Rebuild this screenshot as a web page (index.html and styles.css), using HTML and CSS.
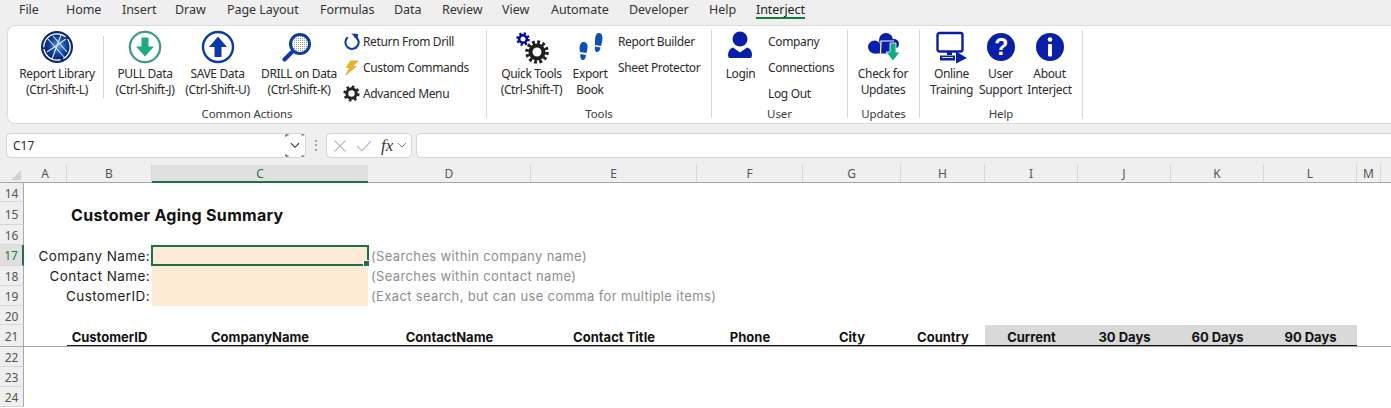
FILE: index.html
```html
<!DOCTYPE html>
<html lang="en">
<head>
    <meta charset="UTF-8">
    <title>Customer Aging Summary - Excel</title>
    <link rel="stylesheet" href="styles.css">
</head>
<body>
    <nav class="tabs">
        <span class="tab t-file">File</span>
        <span class="tab t-home">Home</span>
        <span class="tab t-insert">Insert</span>
        <span class="tab t-draw">Draw</span>
        <span class="tab t-layout">Page Layout</span>
        <span class="tab t-formulas">Formulas</span>
        <span class="tab t-data">Data</span>
        <span class="tab t-review">Review</span>
        <span class="tab t-view">View</span>
        <span class="tab t-automate">Automate</span>
        <span class="tab t-dev">Developer</span>
        <span class="tab t-help">Help</span>
        <span class="tab active">Interject</span>
    </nav>

    <div class="ribbon">
        <section class="group g-common">
            <div class="group-body">
                <div class="big w-library">
                    <svg class="big-icon" viewBox="0 0 34 34">
                        <defs>
                            <radialGradient id="globe" cx="0.55" cy="0.45" r="0.6">
                                <stop offset="0" stop-color="#5f9be8"/>
                                <stop offset="0.55" stop-color="#14479f"/>
                                <stop offset="1" stop-color="#08205f"/>
                            </radialGradient>
                        </defs>
                        <circle cx="17" cy="17" r="16" fill="#0a2a78"/>
                        <circle cx="17" cy="17" r="13.2" fill="none" stroke="#fff" stroke-width="1.3" stroke-dasharray="14 3 22 2 30 3"/>
                        <circle cx="17" cy="17" r="12" fill="url(#globe)"/>
                        <path d="M8 9 L25 28 M13 6 L27 22 M21 5 L12 29 M26 9 L7 22" stroke="#dbe9fb" stroke-width="1.1" fill="none"/>
                    </svg>
                    <span>Report Library<br>(Ctrl-Shift-L)</span>
                </div>
                <div class="sep"></div>
                <div class="big w-pull">
                    <svg class="big-icon" viewBox="0 0 34 34">
                        <circle cx="17" cy="17" r="15" fill="#fff" stroke="#2aa98c" stroke-width="2"/>
                        <circle cx="17" cy="17" r="16" fill="none" stroke="#5a6b68" stroke-width="0.6"/>
                        <path d="M13.5 7.500h7v9h5.500L17 26.500 8 16.500h5.500z" fill="#1fa888"/>
                    </svg>
                    <span>PULL Data<br>(Ctrl-Shift-J)</span>
                </div>
                <div class="big w-save">
                    <svg class="big-icon" viewBox="0 0 34 34">
                        <circle cx="17" cy="17" r="15" fill="#fff" stroke="#0a3aa5" stroke-width="2.400"/>
                        <path d="M13.5 27v-10H8l9-10.500L26 17h-5.500v10z" fill="#0a3aa5"/>
                    </svg>
                    <span>SAVE Data<br>(Ctrl-Shift-U)</span>
                </div>
                <div class="big w-drill">
                    <svg class="big-icon" viewBox="0 0 34 34">
                        <defs>
                            <pattern id="hatch" width="2" height="2" patternUnits="userSpaceOnUse">
                                <rect width="2" height="2" fill="#fff"/>
                                <rect width="1" height="1" fill="#9a9a9a"/>
                            </pattern>
                        </defs>
                        <path d="M10 22 L2.500 29.500" stroke="#0a3aa5" stroke-width="4" stroke-linecap="round"/>
                        <circle cx="18" cy="14" r="9.500" fill="url(#hatch)" stroke="#0a3aa5" stroke-width="3"/>
                    </svg>
                    <span>DRILL on Data<br>(Ctrl-Shift-K)</span>
                </div>
                <div class="stack">
                    <div class="small">
                        <svg class="small-icon" viewBox="0 0 18 18">
                            <path d="M5 4.500a7 7 0 1 0 7-1.200" fill="none" stroke="#0a3aa5" stroke-width="2.200"/>
                            <path d="M9 0.500l7 0.500-1 6.500z" fill="#0a3aa5"/>
                        </svg>
                        <span>Return From Drill</span>
                    </div>
                    <div class="small">
                        <svg class="small-icon" viewBox="0 0 18 18">
                            <path d="M8 2h8L10 8h4L3 17l4-8H3.500z" fill="#f0b41e" stroke="#c98a10" stroke-width="0.500"/>
                        </svg>
                        <span>Custom Commands</span>
                    </div>
                    <div class="small">
                        <svg class="small-icon" viewBox="0 0 18 18">
                            <circle cx="9" cy="9" r="5" fill="none" stroke="#262626" stroke-width="3.200"/>
                            <circle cx="9" cy="9" r="7" fill="none" stroke="#262626" stroke-width="3.200" stroke-dasharray="2.700 2.800"/>
                        </svg>
                        <span>Advanced Menu</span>
                    </div>
                </div>
            </div>
            <div class="group-label">Common Actions</div>
        </section>

        <section class="group g-tools">
            <div class="group-body">
                <div class="big w-quick">
                    <svg class="big-icon" viewBox="0 0 34 34">
                        <circle cx="8" cy="9" r="3.800" fill="none" stroke="#0000a8" stroke-width="2.600"/>
                        <circle cx="8" cy="9" r="5.600" fill="none" stroke="#0000a8" stroke-width="2.400" stroke-dasharray="2.200 2.200"/>
                        <circle cx="22" cy="22" r="6.500" fill="none" stroke="#1e1e1e" stroke-width="4"/>
                        <circle cx="22" cy="22" r="10" fill="none" stroke="#1e1e1e" stroke-width="3.600" stroke-dasharray="2.800 2.430"/>
                    </svg>
                    <span>Quick Tools<br>(Ctrl-Shift-T)</span>
                </div>
                <div class="big w-export">
                    <svg class="big-icon" viewBox="0 0 34 34">
                        <path d="M10.500 12c3 0 4.500 2.500 4 6-.3 2-.6 3.500-1 5l-6.500-1c-1-3.500-.5-10 3.500-10z" fill="#0f50b8"/>
                        <path d="M7.500 24l5.500 1c-.2 3.500-1.500 5-3.200 5-2 0-2.800-2.500-2.300-6z" fill="#0f50b8"/>
                        <path d="M26 3c3.500 0 4 4.500 3 9-.4 1.500-.7 3-1 4l-6-1c0-4-.5-12 4-12z" fill="#0f50b8"/>
                        <path d="M22 16.500l5.500 1c-.5 3-1.800 4.500-3.500 4.500-1.800 0-2.500-2.500-2-5.500z" fill="#0f50b8"/>
                    </svg>
                    <span>Export<br>Book</span>
                </div>
                <div class="stack plain">
                    <div class="small"><span>Report Builder</span></div>
                    <div class="small"><span>Sheet Protector</span></div>
                </div>
            </div>
            <div class="group-label">Tools</div>
        </section>

        <section class="group g-user">
            <div class="group-body">
                <div class="big w-login">
                    <svg class="big-icon" viewBox="0 0 34 34">
                        <circle cx="16" cy="9" r="7.500" fill="#0a1fa8"/>
                        <path d="M9 17.500l7 5 7-5c3.500 1 5 4 5 7.500 0 2.500-1 3-3 3H7c-2 0-3-.5-3-3 0-3.500 2-6.500 5-7.500z" fill="#0a1fa8"/>
                    </svg>
                    <span>Login</span>
                </div>
                <div class="stack plain">
                    <div class="small"><span>Company</span></div>
                    <div class="small"><span>Connections</span></div>
                    <div class="small"><span>Log Out</span></div>
                </div>
            </div>
            <div class="group-label">User</div>
        </section>

        <section class="group g-updates">
            <div class="group-body">
                <div class="big w-updates">
                    <svg class="big-icon" viewBox="0 0 34 34">
                        <circle cx="8.500" cy="17" r="6.500" fill="#0a1fa8"/>
                        <circle cx="20" cy="10" r="7" fill="#0a1fa8"/>
                        <circle cx="28" cy="14" r="5" fill="#0a1fa8"/>
                        <path d="M8 15h22v8.500H8z" fill="#0a1fa8"/>
                        <path d="M15 10.500c0 5-.5 9-.5 13M15 11h13" fill="none" stroke="#fff" stroke-width="1.200"/>
                        <path d="M24 13h6v9h4l-7 9-7-9h4z" fill="#12ab85" stroke="#fff" stroke-width="0.800"/>
                    </svg>
                    <span>Check for<br>Updates</span>
                </div>
            </div>
            <div class="group-label">Updates</div>
        </section>

        <section class="group g-help">
            <div class="group-body">
                <div class="big w-help">
                    <svg class="big-icon" viewBox="0 0 34 34">
                        <rect x="2.500" y="3" width="25" height="18.500" rx="2" fill="none" stroke="#0a1fa8" stroke-width="2.400"/>
                        <path d="M12 22h5v3h-5z" fill="#0a1fa8"/>
                        <path d="M5 25.500h15v5H5z" fill="#0a1fa8"/>
                        <path d="M7 27.500h11" stroke="#fff" stroke-width="0.900"/>
                        <path d="M21 21.500l11 6.500-11 5.500z" fill="#0a1fa8"/>
                    </svg>
                    <span>Online<br>Training</span>
                </div>
                <div class="big w-help">
                    <svg class="big-icon" viewBox="0 0 34 34">
                        <circle cx="17" cy="17" r="14" fill="#0a1fa8"/>
                        <text x="17" y="25" class="glyph q">?</text>
                    </svg>
                    <span>User<br>Support</span>
                </div>
                <div class="big w-help">
                    <svg class="big-icon" viewBox="0 0 34 34">
                        <circle cx="17" cy="17" r="14" fill="#0a1fa8"/>
                        <circle cx="17" cy="9.500" r="2.300" fill="#fff"/>
                        <rect x="15" y="14" width="4" height="12.500" rx="1" fill="#fff"/>
                    </svg>
                    <span>About<br>Interject</span>
                </div>
            </div>
            <div class="group-label">Help</div>
        </section>
    </div>

    <div class="formula-bar">
        <div class="name-box">
            <span>C17</span>
            <svg class="name-drop" viewBox="0 0 20 25">
                <path d="M0 3V1h3M0 22v2h3M17 1h2.500M17 24h2.500" fill="none" stroke="#222" stroke-width="1"/>
                <path d="M5.500 10l4.500 4.500 4.500-4.500" fill="none" stroke="#333" stroke-width="1.200"/>
            </svg>
        </div>
        <div class="grip">⋮</div>
        <div class="fx-box">
            <svg width="14" height="14" viewBox="0 0 14 14"><path d="M1.500 1.500l11 11M12.500 1.500l-11 11" stroke="#bdbdbd" stroke-width="1.200"/></svg>
            <svg width="16" height="14" viewBox="0 0 16 14"><path d="M1 7l5 5L15 2" fill="none" stroke="#bdbdbd" stroke-width="1.200"/></svg>
            <span class="fx">fx</span>
            <svg class="fx-drop" width="10" height="7" viewBox="0 0 10 7"><path d="M1 1l4 4 4-4" fill="none" stroke="#888" stroke-width="1"/></svg>
        </div>
        <div class="formula-input"></div>
    </div>

    <div class="sheet">
        <div class="row col-heads">
            <div class="corner"><i></i></div>
            <div class="ch">A</div>
            <div class="ch">B</div>
            <div class="ch selected">C</div>
            <div class="ch">D</div>
            <div class="ch">E</div>
            <div class="ch">F</div>
            <div class="ch">G</div>
            <div class="ch">H</div>
            <div class="ch">I</div>
            <div class="ch">J</div>
            <div class="ch">K</div>
            <div class="ch">L</div>
            <div class="ch">M</div>
        </div>

        <div class="row r19"><div class="rh">14</div></div>
        <div class="row r23">
            <div class="rh tall">15</div>
            <div class="title">Customer Aging Summary</div>
        </div>
        <div class="row r20"><div class="rh">16</div></div>
        <div class="row r21">
            <div class="rh on">17</div>
            <div></div>
            <div class="label">Company Name:</div>
            <div class="input current"></div>
            <div class="hint">(Searches within company name)</div>
        </div>
        <div class="row r20">
            <div class="rh">18</div>
            <div></div>
            <div class="label">Contact Name:</div>
            <div class="input"></div>
            <div class="hint">(Searches within contact name)</div>
        </div>
        <div class="row r20">
            <div class="rh">19</div>
            <div></div>
            <div class="label">CustomerID:</div>
            <div class="input"></div>
            <div class="hint">(Exact search, but can use comma for multiple items)</div>
        </div>
        <div class="row r19"><div class="rh">20</div></div>
        <div class="row r22 frozen">
            <div class="rh">21</div>
            <div></div>
            <div class="hd">CustomerID</div>
            <div class="hd">CompanyName</div>
            <div class="hd">ContactName</div>
            <div class="hd">Contact Title</div>
            <div class="hd">Phone</div>
            <div class="hd">City</div>
            <div class="hd">Country</div>
            <div class="hd shaded">Current</div>
            <div class="hd shaded">30 Days</div>
            <div class="hd shaded">60 Days</div>
            <div class="hd shaded">90 Days</div>
        </div>
        <div class="row r20"><div class="rh">22</div></div>
        <div class="row r20"><div class="rh">23</div></div>
        <div class="row r20"><div class="rh">24</div></div>
    </div>
</body>
</html>
```

FILE: styles.css
```css
* {
    box-sizing: border-box;
}

html, body {
    margin: 0;
    padding: 0;
    height: 100%;
    overflow: hidden;
}

body {
    width: 1391px;
    height: 408px;
    background-color: #efefef;
    color: #2b2b2b;
    font-family: "Noto Sans", "Open Sans", sans-serif;
    font-size: 12px;
    letter-spacing: -0.35px;
}

/* tabs */
.tabs {
    display: flex;
    height: 25px;
    padding-left: 19px;
    font-size: 12.5px;
    line-height: 19px;
    letter-spacing: -0.05px;
}

.tab {
    color: #333;
    white-space: nowrap;
}

.t-file { width: 47px; }
.t-home { width: 56px; }
.t-insert { width: 53px; }
.t-draw { width: 52px; }
.t-layout { width: 93px; }
.t-formulas { width: 74px; }
.t-data { width: 48px; }
.t-review { width: 60px; }
.t-view { width: 49px; }
.t-automate { width: 78px; }
.t-dev { width: 80px; }
.t-help { width: 47px; }

.tab.active {
    height: 19px;
    border-bottom: 2px solid #107c41;
    padding-bottom: 1px;
    color: #222;
}

/* ribbon */
.ribbon {
    display: flex;
    align-items: flex-start;
    height: 99px;
    margin-left: 7px;
    background-color: #fff;
    border: 1px solid #dcdcdc;
    border-right: none;
    border-radius: 8px 0 0 8px;
}

.group {
    display: flex;
    flex-direction: column;
    height: 88px;
    border-right: 1px solid #d6d6d6;
    margin-top: 4px;
}

.g-common { width: 479px; }
.g-tools { width: 225px; }
.g-user { width: 136px; }
.g-updates { width: 72px; }
.g-help { width: 163px; }

.group-body {
    display: flex;
    flex: none;
    height: 77px;
}

.g-common .group-body { padding-left: 4px; }
.g-tools .group-body { padding-left: 9px; }
.g-user .group-body { padding-left: 6px; }
.g-help .group-body { padding-left: 7px; }

.group-label {
    flex: none;
    height: 14px;
    line-height: 14px;
    text-align: center;
    font-size: 11.5px;
    letter-spacing: -0.1px;
    color: #3a3a3a;
}

.big {
    display: flex;
    flex-direction: column;
    align-items: center;
    text-align: center;
    line-height: 16px;
    white-space: nowrap;
}

.big-icon {
    width: 34px;
    height: 34px;
    margin-bottom: 2px;
    flex-shrink: 0;
}

.big span {
    display: block;
}

.w-library { width: 90px; }
.w-pull { width: 70px; }
.w-save { width: 75px; }
.w-drill { width: 88px; }
.w-quick { width: 71px; }
.w-export { width: 46px; }
.w-login { width: 45px; }
.w-updates { width: 70px; }
.w-help { width: 49px; }

.sep {
    width: 1px;
    height: 62px;
    margin: 6px 6px 0 1px;
    background-color: #d6d6d6;
}

.stack {
    display: flex;
    flex-direction: column;
    margin-top: -2px;
}

.stack.plain {
    margin-left: 5px;
}

.small {
    display: flex;
    align-items: center;
    gap: 3px;
    height: 26px;
    white-space: nowrap;
}

.small-icon {
    width: 17px;
    height: 17px;
}

.glyph {
    fill: #fff;
    font-family: "Liberation Sans", sans-serif;
    font-weight: bold;
    text-anchor: middle;
}

.q {
    font-size: 23px;
}

/* formula bar */
.formula-bar {
    display: flex;
    align-items: stretch;
    height: 25px;
    margin-top: 9px;
    padding-left: 6px;
}

.name-box {
    display: flex;
    justify-content: space-between;
    align-items: center;
    width: 300px;
    padding-left: 6px;
    background-color: #fff;
    border: 1px solid #d4d4d4;
    border-radius: 5px;
    font-size: 12px;
    letter-spacing: 0;
}

.name-drop {
    width: 20px;
    height: 23px;
}

.grip {
    width: 20px;
    text-align: center;
    color: #777;
    line-height: 23px;
    font-size: 12px;
}

.fx-box {
    display: flex;
    align-items: center;
    gap: 9px;
    width: 86px;
    padding-left: 6px;
    margin-right: 4px;
    background-color: #fff;
    border: 1px solid #d4d4d4;
    border-radius: 5px;
}

.fx {
    font-family: "Liberation Serif", serif;
    font-style: italic;
    font-size: 17px;
    letter-spacing: 0;
    color: #333;
}

.fx-drop {
    margin-left: -5px;
}

.formula-input {
    flex: 1;
    background-color: #fff;
    border: 1px solid #d4d4d4;
    border-right: none;
    border-radius: 5px 0 0 5px;
}

/* sheet */
.sheet {
    margin-top: 7px;
    height: 243px;
    background-color: #fff;
    font-family: "Inter", "Lato", sans-serif;
    font-size: 13px;
    letter-spacing: 0.36px;
    color: #1c1c1c;
}

.row {
    display: grid;
    grid-template-columns: 24px 43px 85px 216px 163px 166px 106px 98px 84px 93px 93px 93px 93px 24px;
    grid-template-rows: 100%;
    align-items: stretch;
}

.r19 { height: 19px; }
.r20 { height: 20px; }
.r21 { height: 21px; }
.r22 { height: 22px; }
.r23 { height: 23px; }

.col-heads {
    height: 18px;
    background-color: #efefef;
    border-bottom: 1px solid #a8a8a8;
    font-family: "Noto Sans", sans-serif;
    font-size: 12px;
    letter-spacing: 0;
    line-height: 18px;
    color: #555;
}

.corner {
    position: relative;
}

.corner i {
    position: absolute;
    right: 3px;
    bottom: 2px;
    border-style: solid;
    border-width: 0 0 10px 10px;
    border-color: transparent transparent #d2d2d2 transparent;
}

.ch {
    text-align: center;
    border-right: 1px solid #d6d6d6;
}

.ch.selected {
    background-color: #e0e0e0;
    color: #217346;
    height: 18px;
    border-right: none;
    border-bottom: 2px solid #217346;
}

.rh {
    background-color: #efefef;
    border-right: 1px solid #a8a8a8;
    border-bottom: 1px solid #d6d6d6;
    font-family: "Noto Sans", sans-serif;
    font-size: 12px;
    letter-spacing: 0;
    line-height: 21px;
    color: #555;
    text-align: center;
}

.rh.tall {
    line-height: 25px;
}

.rh.on {
    background-color: #e0e0e0;
    border-right: 2px solid #217346;
    color: #217346;
}

.title {
    grid-column: 3 / span 3;
    padding: 3px 0 0 4px;
    white-space: nowrap;
    font-weight: 700;
    font-size: 16px;
    letter-spacing: 0.3px;
    color: #111;
}

.label {
    display: flex;
    justify-content: flex-end;
    align-items: center;
    padding-right: 2px;
    white-space: nowrap;
    font-size: 13.5px;
    letter-spacing: 0.4px;
}

.input {
    background-color: #fdebd6;
}

.input.current {
    position: relative;
    border: 2px solid #1f6f45;
    margin-left: -1px;
    margin-right: -1px;
}

.input.current::after {
    content: "";
    position: absolute;
    right: -3px;
    bottom: -3px;
    width: 5px;
    height: 5px;
    background-color: #1f6f45;
    border: 1px solid #fff;
}

.hint {
    display: flex;
    align-items: center;
    padding-left: 3px;
    white-space: nowrap;
    color: #8e8e8e;
}

.frozen {
    border-bottom: 1px solid #a8a8a8;
}

.frozen .rh {
    line-height: 24px;
    border-bottom: none;
}

.hd {
    display: flex;
    justify-content: center;
    align-items: center;
    padding-top: 3px;
    white-space: nowrap;
    font-weight: 700;
    font-size: 13px;
    letter-spacing: 0;
    color: #111;
    border-bottom: 1px solid #111;
}

.hd.shaded {
    background-color: #d9d9d9;
}
```
